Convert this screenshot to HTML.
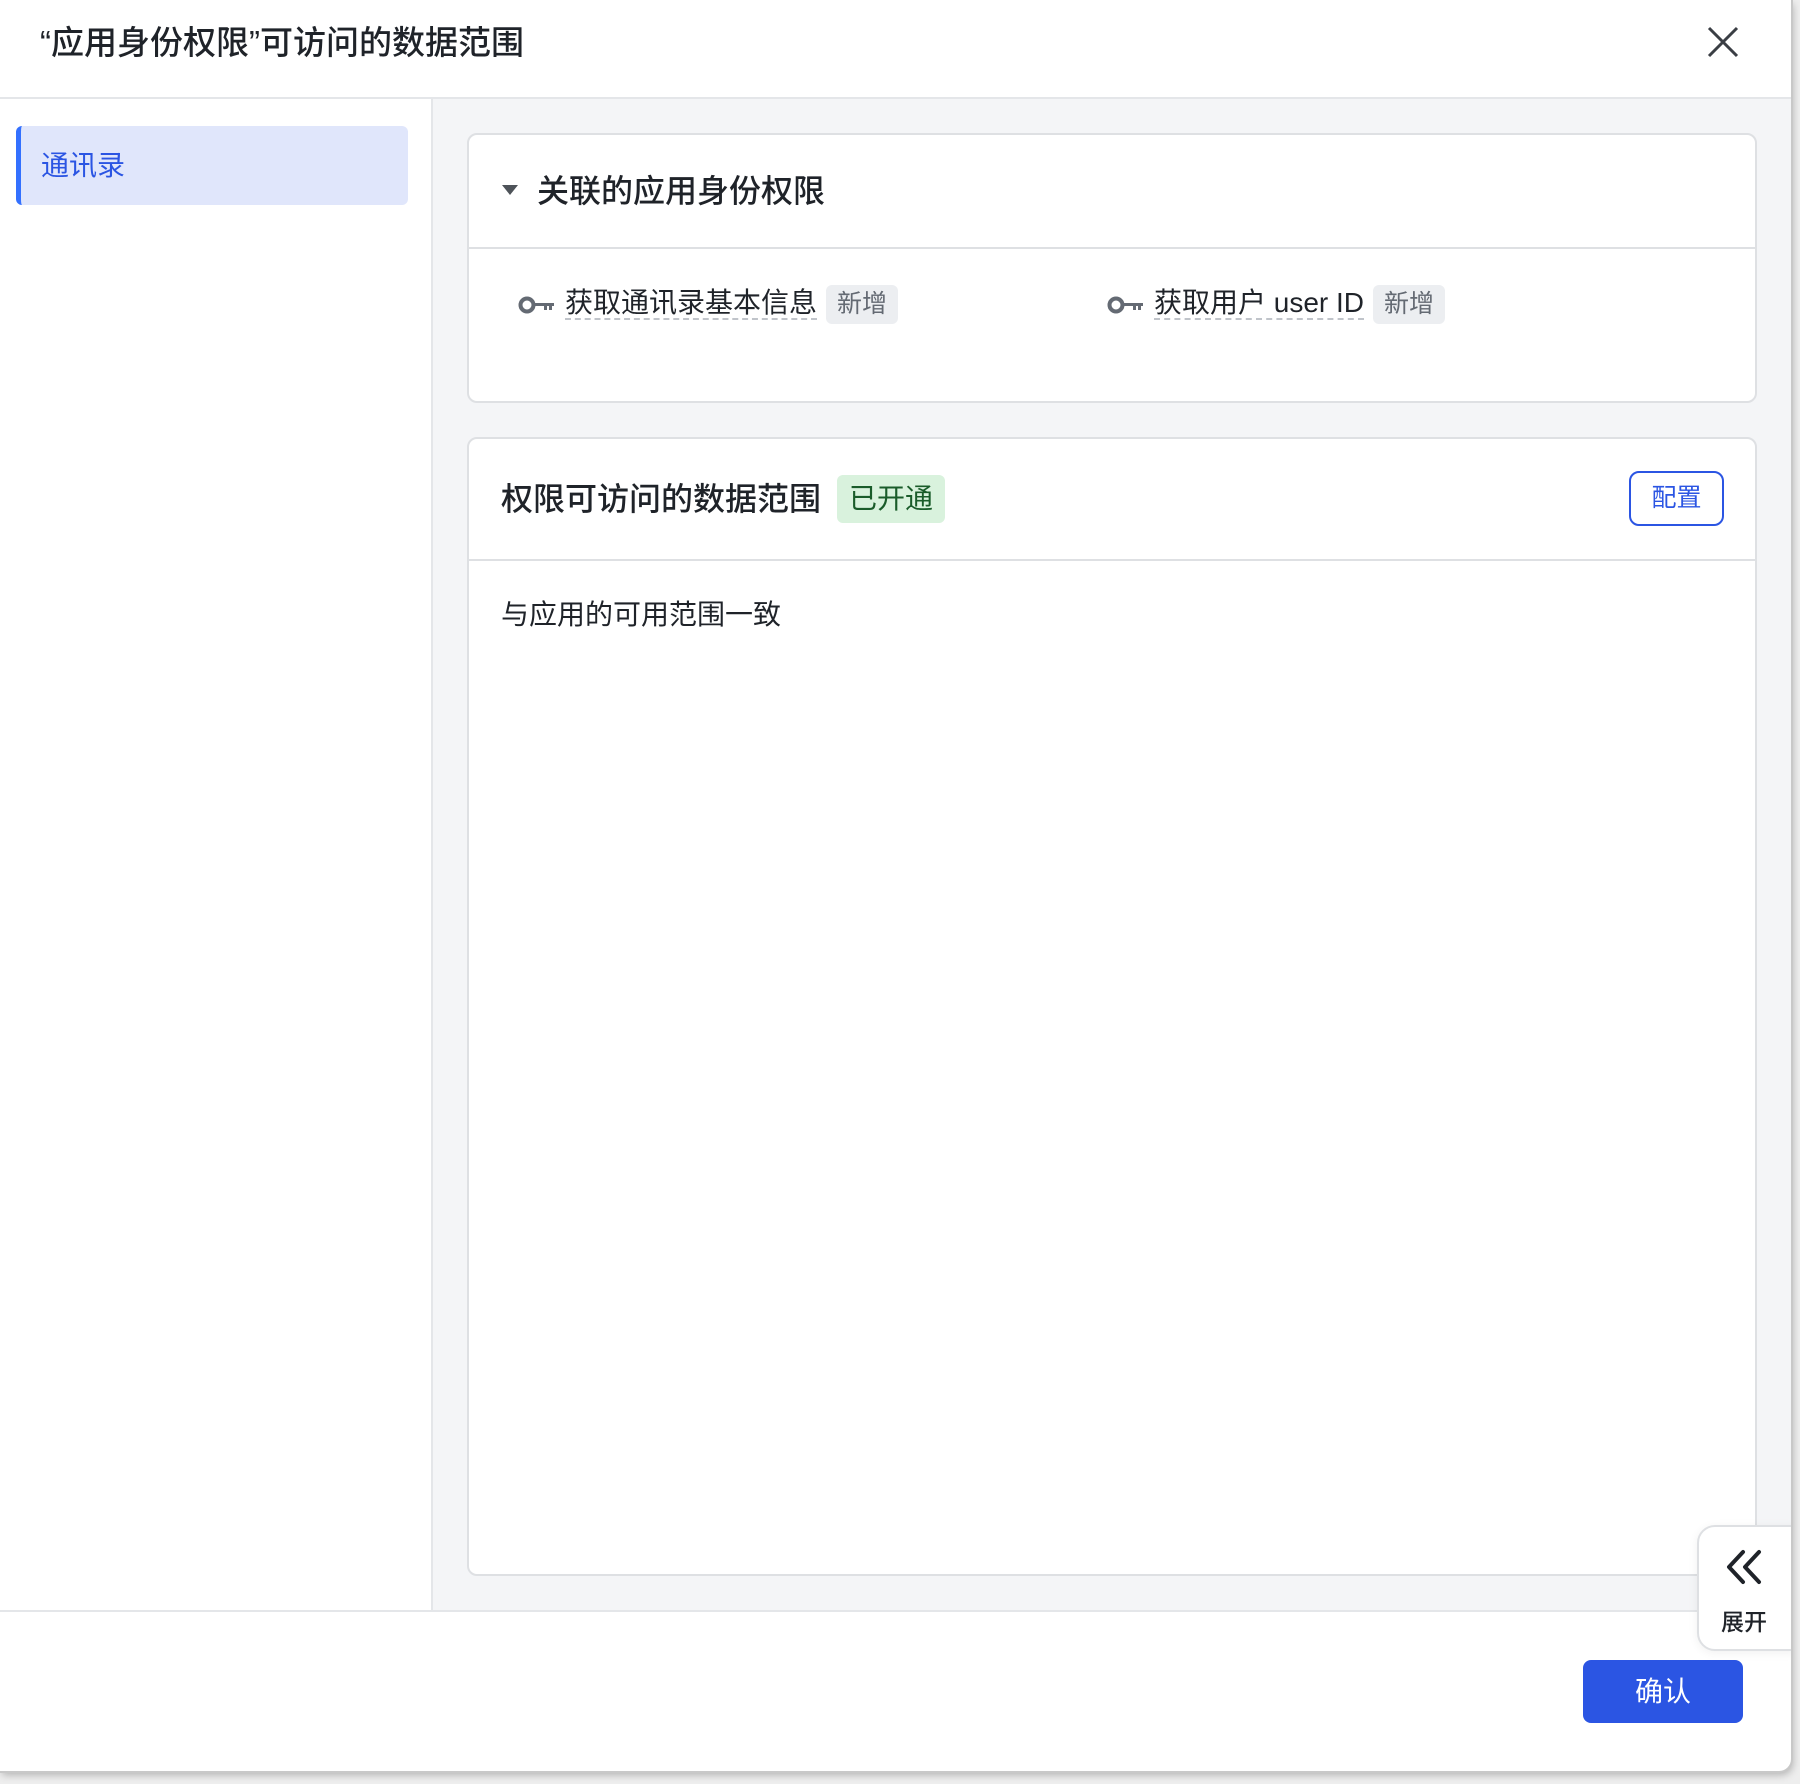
<!DOCTYPE html>
<html><head><meta charset="utf-8"><style>
*{box-sizing:border-box;margin:0;padding:0}
body{width:1800px;height:1784px;background:#eeeeee;font-family:"Liberation Sans","Noto Sans CJK SC",sans-serif;color:#1f2329;position:relative;overflow:hidden}
.modal{position:absolute;left:0;top:0;width:1791px;height:1771px;background:#fff;border-bottom-right-radius:12px;overflow:hidden;box-shadow:0 0 0 2px #c8c8c8,2px 4px 8px rgba(0,0,0,.25)}
.hdr{position:absolute;left:0;top:0;width:100%;height:99px;border-bottom:2px solid #e4e6e9}
.title{position:absolute;left:40px;top:22px;font-size:33px;line-height:42px;font-weight:500}
.side{position:absolute;left:0;top:99px;width:433px;height:1511px;border-right:2px solid #e4e6e9;background:#fff}
.item{position:absolute;left:16px;top:27px;width:392px;height:79px;background:#e0e6fb;border-radius:6px;border-left:5px solid #3370ff;color:#2b55e3;font-size:28px;line-height:79px;padding-left:20px}
.main{position:absolute;left:433px;top:99px;width:1358px;height:1511px;background:#f4f5f7}
.card{position:absolute;left:34px;width:1290px;background:#fff;border:2px solid #dee0e3;border-radius:10px}
.c1{top:34px;height:270px}
.c2{top:338px;height:1139px}
.ch{position:absolute;left:0;top:0;width:100%;border-bottom:2px solid #dee0e3}
.k{position:absolute;top:149px;font-size:28px;line-height:38px}
.k .t{border-bottom:2px dashed #c0c4ca}
.tag{display:inline-block;background:#eceef1;color:#646a73;font-size:25px;line-height:39px;padding:0 11px;border-radius:6px;margin-left:9px;vertical-align:middle}
.footer{position:absolute;left:0;top:1610px;width:100%;height:161px;border-top:2px solid #e4e6e9}
</style></head><body>
<div class="modal">
 <div class="hdr"><div class="title">“应用身份权限”可访问的数据范围</div>
  <svg style="position:absolute;left:1707px;top:26px" width="32" height="32" viewBox="0 0 32 32"><path d="M2 2L30 30M30 2L2 30" stroke="#3a3e44" stroke-width="3"/></svg>
 </div>
 <div class="side"><div class="item">通讯录</div></div>
 <div class="main">
  <div class="card c1">
   <div class="ch" style="height:114px">
    <svg style="position:absolute;left:32px;top:48px" width="18" height="14" viewBox="0 0 18 14"><path d="M1 2H17L9 12Z" fill="#4e5359"/></svg>
    <div style="position:absolute;left:68px;top:35px;font-size:32px;line-height:42px;font-weight:500">关联的应用身份权限</div>
   </div>
   <div class="k" style="left:49px"><svg width="38" height="20" viewBox="0 0 38 20" style="vertical-align:middle;margin-right:9px"><circle cx="9" cy="10" r="6.5" fill="none" stroke="#646a73" stroke-width="4"/><path d="M15 8H36V11H34V15H31V11H29V15H26V11H15Z" fill="#646a73"/></svg><span class="t">获取通讯录基本信息</span><span class="tag">新增</span></div>
   <div class="k" style="left:638px"><svg width="38" height="20" viewBox="0 0 38 20" style="vertical-align:middle;margin-right:9px"><circle cx="9" cy="10" r="6.5" fill="none" stroke="#646a73" stroke-width="4"/><path d="M15 8H36V11H34V15H31V11H29V15H26V11H15Z" fill="#646a73"/></svg><span class="t">获取用户 user ID</span><span class="tag">新增</span></div>
  </div>
  <div class="card c2">
   <div class="ch" style="height:122px">
    <div style="position:absolute;left:32px;top:39px;font-size:32px;line-height:42px;font-weight:500">权限可访问的数据范围</div>
    <div style="position:absolute;left:368px;top:36px;width:108px;height:48px;background:#d9f2dd;color:#1a5c2a;font-size:28px;line-height:48px;text-align:center;border-radius:6px">已开通</div>
    <div style="position:absolute;left:1160px;top:32px;width:95px;height:55px;border:2px solid #2b55e3;color:#2b55e3;font-size:25px;line-height:51px;text-align:center;border-radius:10px">配置</div>
   </div>
   <div style="position:absolute;left:32px;top:157px;font-size:28px;line-height:38px">与应用的可用范围一致</div>
  </div>
 </div>
 <div class="footer">
  <div style="position:absolute;left:1583px;top:48px;width:160px;height:63px;background:#2b55e3;color:#fff;border-radius:8px;font-size:28px;line-height:63px;text-align:center">确认</div>
 </div>
 <div style="position:absolute;left:1697px;top:1525px;width:100px;height:126px;background:#fff;border:2px solid #dee0e3;border-radius:18px 0 0 18px;box-shadow:0 2px 10px rgba(0,0,0,.06)">
  <svg style="position:absolute;left:26px;top:22px" width="40" height="36" viewBox="0 0 40 36"><path d="M18 3L4 18L18 33M34 3L20 18L34 33" fill="none" stroke="#1f2329" stroke-width="4" stroke-linecap="round" stroke-linejoin="round"/></svg>
  <div style="position:absolute;left:22px;top:80px;font-size:23px;line-height:30px;font-weight:500">展开</div>
 </div>
</div>
</body></html>
